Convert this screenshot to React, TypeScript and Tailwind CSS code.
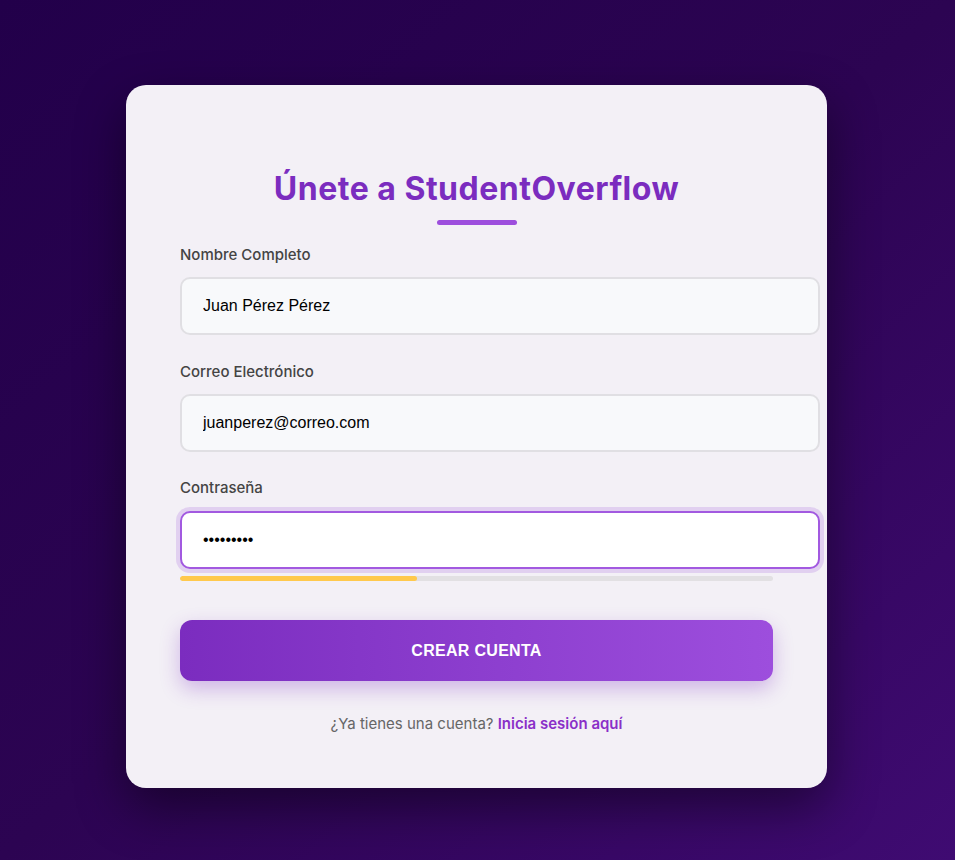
import { useState } from "react";

const poppins = { fontFamily: "Inter, 'Noto Sans', sans-serif" };
const arial = { fontFamily: "'Liberation Sans', Arial, sans-serif" };

const App = () => {
  const [name, setName] = useState("Juan Pérez Pérez");
  const [email, setEmail] = useState("juanperez@correo.com");
  const [password, setPassword] = useState("123456789");
  const strength = 40;

  return (
    <div className="min-h-[860px] w-full bg-gradient-to-br from-[#22004a] via-[#2c0452] to-[#3f0b72] flex justify-center pt-[85px] pr-[2px]">
      <div
        className="w-[701px] h-[703px] bg-[#f3f0f6] rounded-[20px] shadow-[0_20px_50px_rgba(0,0,0,0.45)] px-[54px] pt-[80px] flex flex-col"
        style={poppins}
      >
        <h1 className="text-center text-[#7b2cbf] text-[32px] leading-[48px] font-bold tracking-[0.5px]">
          Únete a StudentOverflow
        </h1>
        <div className="mx-auto mt-[7px] w-20 h-[5px] rounded-full bg-[#9d4edd]" />

        <form className="flex flex-col mt-[19px]" onSubmit={(e) => e.preventDefault()}>
          <label className="text-[15px] leading-[22px] font-medium text-[#444]">Nombre Completo</label>
          <input
            value={name}
            onChange={(e) => setName(e.target.value)}
            className="mt-[11px] w-[640px] h-[58px] px-[21px] rounded-[10px] border-2 border-[#e0dfe3] bg-[#f8f9fb] text-[16px] text-black outline-none"
            style={arial}
          />

          <label className="mt-[26px] text-[15px] leading-[22px] font-medium text-[#444]">Correo Electrónico</label>
          <input
            value={email}
            onChange={(e) => setEmail(e.target.value)}
            className="mt-[11px] w-[640px] h-[58px] px-[21px] rounded-[10px] border-2 border-[#e0dfe3] bg-[#f8f9fb] text-[16px] text-black outline-none"
            style={arial}
          />

          <label className="mt-[25px] text-[15px] leading-[22px] font-medium text-[#444]">Contraseña</label>
          <input
            type="password"
            value={password}
            onChange={(e) => setPassword(e.target.value)}
            className="mt-[12px] w-[640px] h-[58px] px-[21px] rounded-[10px] border-2 border-[#a259e0] bg-white text-[16px] text-black outline-none shadow-[0_0_0_4px_rgba(157,78,221,0.2)]"
            style={arial}
          />
          <div className="mt-[7px] h-[5px] w-full rounded-full bg-[#e2e0e3] overflow-hidden">
            <div className="h-full bg-[#ffc94d] rounded-full" style={{ width: `${strength}%` }} />
          </div>

          <button
            type="submit"
            className="mt-[39px] h-[61px] w-full rounded-xl bg-gradient-to-r from-[#7b2cbf] to-[#9d4edd] text-white text-[16px] font-bold uppercase tracking-[0.3px] shadow-[0_8px_20px_rgba(123,44,191,0.3)]"
            style={arial}
          >
            Crear Cuenta
          </button>
        </form>

        <p className="mt-[32px] text-center text-[15px] leading-[22px] text-[#666]">
          ¿Ya tienes una cuenta?{" "}
          <a href="#" className="font-semibold text-[#8a2fc8]">
            Inicia sesión aquí
          </a>
        </p>
      </div>
    </div>
  );
};

export default App;
